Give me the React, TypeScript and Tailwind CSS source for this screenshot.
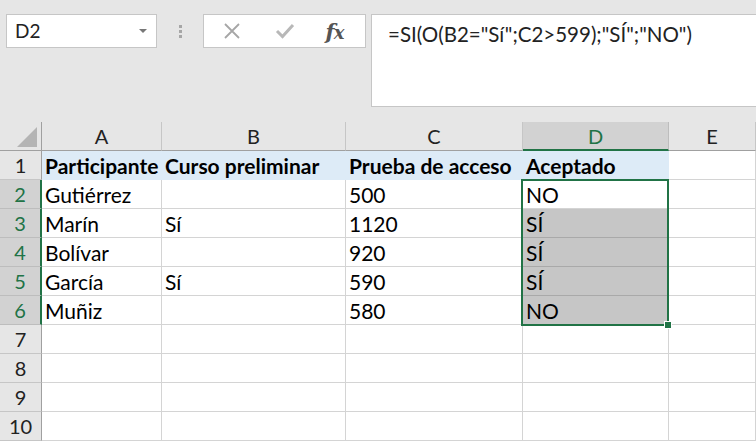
import React from 'react';

const cols = ['A', 'B', 'C', 'D', 'E'];

const rows: string[][] = [
  ['Participante', 'Curso preliminar', 'Prueba de acceso', 'Aceptado', ''],
  ['Gutiérrez', '', '500', 'NO', ''],
  ['Marín', 'Sí', '1120', 'SÍ', ''],
  ['Bolívar', '', '920', 'SÍ', ''],
  ['García', 'Sí', '590', 'SÍ', ''],
  ['Muñiz', '', '580', 'NO', ''],
  ['', '', '', '', ''],
  ['', '', '', '', ''],
  ['', '', '', '', ''],
  ['', '', '', '', ''],
];

const App: React.FC = () => {
  return (
    <div className="w-[756px] h-[441px] bg-[#e6e6e6] overflow-hidden font-['Lato',sans-serif] text-[#000]">
      {/* Formula bar */}
      <div className="h-[122px] flex items-start pt-[14px] pl-[6px]">
        <div className="w-[151px] h-[34px] bg-white border border-[#c6c6c6] flex items-center justify-between pl-[8px] pr-[9px]">
          <span className="text-[19px] text-[#222]">D2</span>
          <svg width="8" height="5" viewBox="0 0 8 5">
            <path d="M0 0 L8 0 L4 4 Z" fill="#777" />
          </svg>
        </div>
        <div className="w-[46px] h-[34px] flex flex-col items-center justify-center gap-[2px]">
          <div className="w-[3px] h-[3px] bg-[#a6a6a6]" />
          <div className="w-[3px] h-[3px] bg-[#a6a6a6]" />
          <div className="w-[3px] h-[3px] bg-[#a6a6a6]" />
        </div>
        <div className="w-[163px] h-[34px] bg-white border border-[#c6c6c6] flex items-center">
          <div className="w-[56px] flex justify-center">
            <svg width="18" height="18" viewBox="0 0 18 18">
              <path d="M2 2 L16 16 M16 2 L2 16" stroke="#a6a6a6" strokeWidth="1.8" />
            </svg>
          </div>
          <div className="w-[50px] flex justify-center">
            <svg width="20" height="16" viewBox="0 0 20 16">
              <path d="M2 8 L7.5 13.5 L18 2" stroke="#b8b8b8" strokeWidth="3" fill="none" />
            </svg>
          </div>
          <div className="flex-1 flex justify-center pr-[6px]">
            <span className="font-['DejaVu_Serif',serif] italic font-bold text-[21px] text-[#555] leading-none tracking-[-1px]">
              f<span className="text-[18px]">x</span>
            </span>
          </div>
        </div>
        <div className="ml-[5px] flex-1 h-[93px] bg-white border border-r-0 border-[#c6c6c6] pl-[16px] pt-[4px]">
          <span className="text-[20.5px] text-[#222]">=SI(O(B2="Sí";C2&gt;599);"SÍ";"NO")</span>
        </div>
      </div>

      {/* Grid */}
      <div className="relative grid grid-cols-[42px_120px_184px_177px_146px_1fr] grid-rows-[repeat(11,29px)] bg-white">
        {/* Corner */}
        <div className="bg-[#e6e6e6] border-r border-b border-[#a0a0a0] flex items-end justify-end pr-[4px] pb-[3px]">
          <svg width="20" height="20" viewBox="0 0 20 20">
            <path d="M20 0 L20 20 L0 20 Z" fill="#b4b4b4" />
          </svg>
        </div>
        {cols.map(c => (
          <div
            key={c}
            className={
              c === 'D'
                ? 'bg-[#d2d2d2] border-r border-[#bdbdbd] border-b-2 border-b-[#217346] flex items-center justify-center text-[20px] text-[#217346]'
                : 'bg-[#e6e6e6] border-r border-[#c6c6c6] border-b border-b-[#a0a0a0] flex items-center justify-center text-[20px] text-[#222]'
            }
          >
            {c}
          </div>
        ))}

        {rows.map((row, r) => {
          const num = r + 1;
          const selRow = num >= 2 && num <= 6;
          return (
            <React.Fragment key={num}>
              <div
                className={
                  selRow
                    ? 'bg-[#d2d2d2] border-b border-[#bdbdbd] border-r-2 border-r-[#217346] flex items-center justify-center text-[20px] text-[#217346]'
                    : 'bg-[#e6e6e6] border-b border-[#c6c6c6] border-r border-r-[#a0a0a0] flex items-center justify-center text-[20px] text-[#222]'
                }
              >
                {num}
              </div>
              {row.map((val, ci) => {
                const header = num === 1 && ci < 4;
                const shaded = ci === 3 && num >= 3 && num <= 6;
                let cls = 'border-r border-b border-[#d4d4d4] flex items-center pl-[3px] pt-[2px] text-[21px] whitespace-nowrap';
                if (header) cls = 'bg-[#ddebf7] border-r border-b border-[#ddebf7] flex items-center pl-[3px] pt-[2px] text-[21px] font-bold whitespace-nowrap';
                if (shaded) cls = 'bg-[#c6c6c6] border-r border-b border-[#a9a9a9] flex items-center pl-[3px] pt-[2px] text-[21px] whitespace-nowrap';
                return (
                  <div key={ci} className={cls}>
                    {val}
                  </div>
                );
              })}
            </React.Fragment>
          );
        })}

        {/* Selection D2:D6 */}
        <div className="absolute left-[521px] top-[57px] w-[148px] h-[147px] border-2 border-[#217346] pointer-events-none" />
        <div className="absolute left-[664px] top-[199px] w-[8px] h-[8px] bg-[#217346] border border-white" />
      </div>
    </div>
  );
};

export default App;
